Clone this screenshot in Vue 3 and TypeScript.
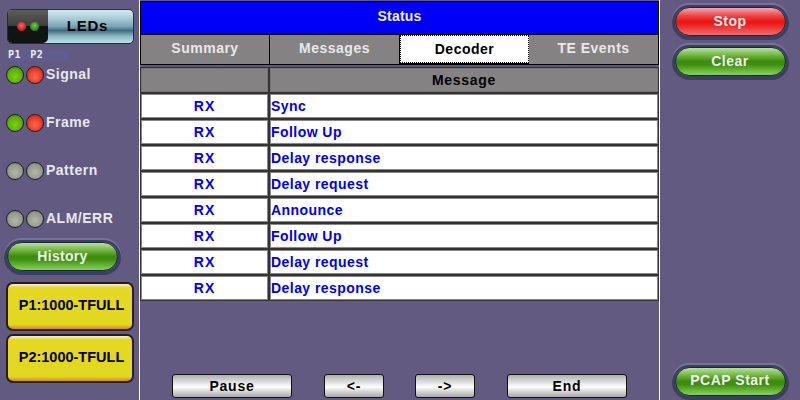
<script setup lang="ts">
const tabs = ['Summary', 'Messages', 'Decoder', 'TE Events']
const rows = ['Sync', 'Follow Up', 'Delay response', 'Delay request', 'Announce', 'Follow Up', 'Delay request', 'Delay response']
const leds = [
  { name: 'Signal', a: 'green', b: 'red' },
  { name: 'Frame', a: 'green', b: 'red' },
  { name: 'Pattern', a: 'off', b: 'off' },
  { name: 'ALM/ERR', a: 'off', b: 'off' },
]
</script>

<template>
  <div class="screen">
    <aside class="left">
      <div class="leds-btn">
        <div class="leds-icon"><i class="mini r"></i><i class="mini g"></i></div>
        <span>LEDs</span>
      </div>
      <div class="ports"><span>P1</span><span>P2</span></div>
      <div v-for="l in leds" :key="l.name" class="led-row">
        <i class="led" :class="l.a"></i><i class="led" :class="l.b"></i>
        <span>{{ l.name }}</span>
      </div>
      <div class="pill green-pill history">History</div>
      <div class="yellow first">P1:1000-TFULL</div>
      <div class="yellow">P2:1000-TFULL</div>
    </aside>

    <main class="center">
      <div class="title">Status</div>
      <div class="tabs">
        <div v-for="t in tabs" :key="t" class="tab" :class="{ active: t === 'Decoder' }">{{ t }}</div>
      </div>
      <div class="table">
        <div class="cell head"></div>
        <div class="cell head">Message</div>
        <template v-for="(r, i) in rows" :key="i">
          <div class="cell dir">RX</div>
          <div class="cell msg">{{ r }}</div>
        </template>
      </div>
      <div class="actions">
        <div class="act wide">Pause</div>
        <div class="act">&lt;-</div>
        <div class="act back">-&gt;</div>
        <div class="act wide">End</div>
      </div>
    </main>

    <aside class="right">
      <div class="pill red-pill">Stop</div>
      <div class="pill green-pill clear">Clear</div>
      <div class="pill green-pill pcap">PCAP Start</div>
    </aside>
  </div>
</template>

<style>
html, body { margin: 0; background: #625a80; }
</style>

<style scoped>
.screen {
  width: 800px; height: 400px; display: flex; overflow: hidden;
  background: #625a80; font-family: "Liberation Sans", Arial, sans-serif;
  font-weight: 700; font-size: 14px; letter-spacing: 0.5px;
}
.left { width: 140px; box-sizing: border-box; border-right: 1px solid #fff; padding: 9px 0 0 0; flex: none; }
.leds-btn {
  width: 127px; height: 35px; margin-left: 7px; box-sizing: border-box; border: 1px solid #2c2c38;
  border-radius: 5px; display: flex; overflow: hidden; color: #000; font-size: 15px;
  background: linear-gradient(#d4e8ec 0, #a9cdd8 25%, #7ba3b3 50%, #3f6b80 62%, #8fb9c4 80%, #b8e4e6 100%);
}
.leds-icon {
  width: 40px; height: 100%; display: flex; align-items: center; justify-content: center; gap: 4px; padding-bottom: 1px; box-sizing: border-box;
  background: linear-gradient(#5c5c58 0, #3e3e3c 49%, #101413 50%, #101413 100%);
  border-radius: 0 0 5px 0; flex: none;
}
.leds-btn span { flex: 1; text-align: center; line-height: 31px; padding-right: 6px; letter-spacing: 0.8px; }
.mini { width: 9px; height: 9px; border-radius: 50%; display: block; }
.mini.r { background: radial-gradient(circle at 50% 40%, #f66 0, #d01818 70%); }
.mini.g { background: radial-gradient(circle at 50% 40%, #7c4 0, #2c7a10 70%); }
.ports {
  margin: 6px 0 0 7px; width: 61px; height: 10px; display: flex; gap: 9px; padding: 0 0 1px 1px; box-sizing: content-box;
  background: #5f5c8e; color: #f0f0f0;
  font: 700 10px/10px "DejaVu Sans Mono", "Liberation Mono", monospace; letter-spacing: 0.6px;
}
.led-row { height: 48px; display: flex; align-items: flex-start; padding-left: 6px; color: #e8e8ee; line-height: 17px; }
.ports + .led-row { margin-top: 5px; }
.led {
  width: 18px; height: 18px; box-sizing: border-box; border: 1.5px solid #16211d; border-radius: 50%; display: block; margin-right: 2px; flex: none;
}
.led.green { background: radial-gradient(circle at 50% 60%, #7ed010 0, #5cb008 55%, #3e8a06 100%); }
.led.red { background: radial-gradient(circle at 50% 60%, #ff6a58 0, #ea3a24 55%, #c42012 100%); }
.led.off { background: radial-gradient(circle at 50% 60%, #b4b6ac 0, #96988e 60%, #74766f 100%); }
.pill {
  width: 111px; height: 29px; box-sizing: border-box; border-radius: 15px; border: 1px solid #1c2636;
  box-shadow: 0 1px 0 3px #3a4060, 0 -1px 0 3px #76729c; color: #f0f0f0; text-align: center; line-height: 26px; font-size: 14px;
}
.green-pill { background: linear-gradient(#b8e0a0 0, #6fb43c 28%, #3d8a0c 50%, #3f8f10 62%, #6cba3c 85%, #86d05c 100%); }
.red-pill { background: linear-gradient(#f0a8b8 0, #ee4848 28%, #ee1414 50%, #ee2020 62%, #ee5050 85%, #ef6a70 100%); }
.history { margin: -16px 0 0 7px; letter-spacing: 0.3px; }
.yellow {
  width: 128px; height: 49px; margin: 3px 0 0 6px; padding-left: 3px; box-sizing: border-box; border: 2px solid #2a1a20; border-radius: 7px;
  background: linear-gradient(#f0f0e8 0, #e6d824 8%, #e0d820 90%, #d88a10 100%);
  color: #000; text-align: center; line-height: 43px; font-size: 14.5px; letter-spacing: 0;
}
.yellow.first { margin-top: 11px; }
.center { width: 520px; flex: none; box-sizing: border-box; border-right: 1px solid #fff; display: flex; flex-direction: column; padding-top: 1px; }
.title {
  height: 33px; box-sizing: border-box; border: 1px solid #000; border-bottom: 0; background: #0000f8; color: #f0f0f0;
  text-align: center; line-height: 29px; font-size: 14px; letter-spacing: 0.2px;
}
.tabs {
  height: 31px; display: grid; grid-template-columns: 129px 130px 129px 129px; border: 1px solid #000; box-sizing: border-box;
  background: #000;
}
.tab { background: #858284; color: #e8e8e8; text-align: center; line-height: 27px; border-right: 1px solid #000; font-size: 14px; letter-spacing: 0.5px; box-sizing: border-box; }
.tab:last-child { border-right: 0; }
.tab.active {
  background: #fff; color: #000; border: 1px dotted #000; line-height: 26px; height: 28px;
}
.table {
  margin-top: 2px; display: grid; grid-template-columns: 127px 1fr; grid-auto-rows: 24px; gap: 2px;
  background: #333; padding: 1px; box-sizing: border-box; height: 234px;
}
.cell { box-sizing: border-box; background: #fff; border: 1px solid #888; line-height: 23px; color: #0000f0; letter-spacing: 0.45px; }
.head { background: #858284; color: #000; text-align: center; letter-spacing: 0.7px; border-color: #777; }
.dir { text-align: center; letter-spacing: 1px; }
.msg { padding-left: 0; }
.actions { margin-top: auto; display: flex; gap: 32px; padding: 0 0 2px 32px; }
.act {
  width: 60px; height: 24px; box-sizing: border-box; border: 1px solid #111; border-radius: 3px; color: #000;
  background: linear-gradient(#b0b0b0 0, #fff 55%, #e8e8e8 65%, #a8a8a8 100%); text-align: center; line-height: 22px; letter-spacing: 0.8px;
}
.back { margin-left: -1px; }
.wide { width: 120px; }
.right { flex: 1; display: flex; flex-direction: column; align-items: center; padding-top: 7px; box-sizing: border-box; }
.clear { margin-top: 11px; }
.pcap { margin-top: auto; margin-bottom: 4px; line-height: 25px; }
</style>
